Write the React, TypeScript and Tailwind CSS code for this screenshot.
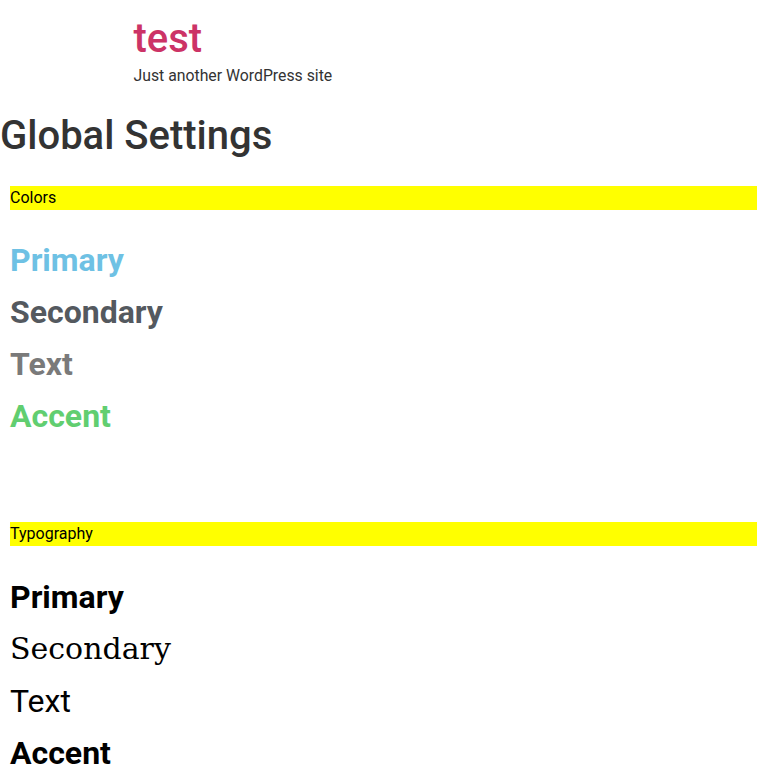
import React from 'react';

const colors = [
  { name: 'Primary', className: 'text-[#6ec1e4]' },
  { name: 'Secondary', className: 'text-[#54595f]' },
  { name: 'Text', className: 'text-[#7a7a7a]' },
  { name: 'Accent', className: 'text-[#61ce70]' },
];

const SectionBar: React.FC<{ label: string }> = ({ label }) => (
  <div className="mx-[10px] h-6 bg-[#ffff00] text-base leading-6 text-black">{label}</div>
);

const App: React.FC = () => {
  return (
    <div className="min-h-screen bg-white font-['Roboto',sans-serif] text-[#333]">
      {/* site header */}
      <header className="mx-auto w-[500px] pt-[15px]">
        <h1 className="text-[40px] leading-[48px] font-medium text-[#cc3366]">test</h1>
        <p className="mt-[1px] text-[15.8px] leading-6 text-[#333]">Just another WordPress site</p>
      </header>

      <main className="mt-[24px]">
        <h1 className="text-[40px] leading-[48px] font-medium text-[#333]">Global Settings</h1>

        <section className="mt-[26px]">
          <SectionBar label="Colors" />
          <div className="mt-8 flex flex-col gap-4 px-[10px]">
            {colors.map((c) => (
              <h2 key={c.name} className={`text-[32px] leading-9 font-bold ${c.className}`}>
                {c.name}
              </h2>
            ))}
          </div>
        </section>

        <section className="mt-[88px]">
          <SectionBar label="Typography" />
          <div className="mt-[33px] flex flex-col gap-4 px-[10px] text-black">
            <h2 className="text-[32px] leading-9 font-bold">Primary</h2>
            <h2 className="font-['DejaVu_Serif',serif] text-[30px] leading-9 font-normal">Secondary</h2>
            <h2 className="text-[32px] leading-9 font-normal">Text</h2>
            <h2 className="text-[32px] leading-9 font-bold">Accent</h2>
          </div>
        </section>
      </main>
    </div>
  );
};

export default App;
